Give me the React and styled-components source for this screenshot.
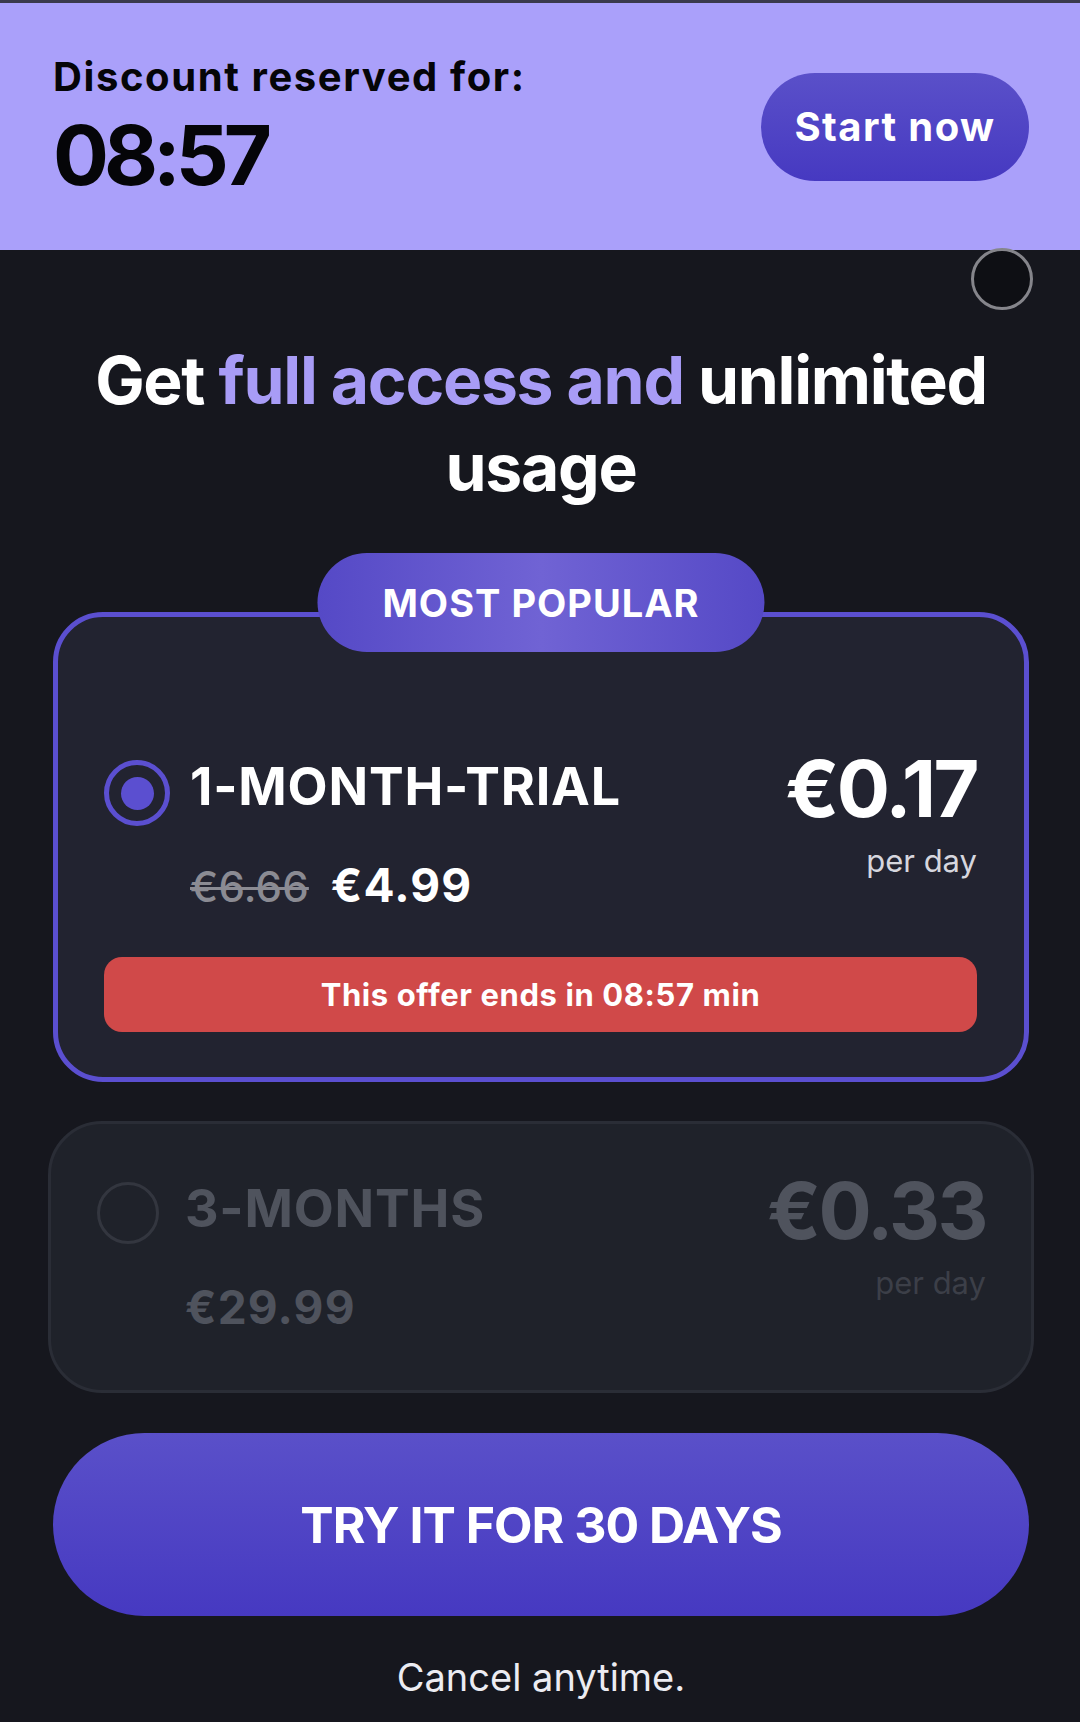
import React from 'react'
import styled, { createGlobalStyle } from 'styled-components'

const GlobalStyle = createGlobalStyle`
  html, body {
    margin: 0;
    padding: 0;
    background: #16171e;
  }
  body {
    font-family: Inter, "Noto Sans", sans-serif;
    -webkit-font-smoothing: antialiased;
  }
  * {
    box-sizing: border-box;
  }
`

const Page = styled.div`
  position: relative;
  width: 1080px;
  min-height: 1722px;
  background: #16171e;
  color: #fff;
`

const Header = styled.header`
  height: 250px;
  border-top: 3px solid #3b3a4c;
  background: #aaa0fa;
  display: flex;
  align-items: center;
  justify-content: space-between;
  padding: 0 51px 0 53px;
`

const Countdown = styled.div`
  display: flex;
  flex-direction: column;
  color: #050508;
`

const CountdownLabel = styled.div`
  font-size: 40px;
  font-weight: 700;
  line-height: 1;
  letter-spacing: 1.6px;
`

const CountdownTime = styled.div`
  margin-top: 17px;
  font-size: 83px;
  font-weight: 700;
  line-height: 1;
  letter-spacing: -5px;
`

const PillButton = styled.button`
  border: none;
  cursor: pointer;
  font-family: inherit;
  color: #fff;
  font-weight: 700;
  border-radius: 999px;
  background: linear-gradient(180deg, #5a50c9 0%, #4639c1 100%);
  display: flex;
  align-items: center;
  justify-content: center;
  width: ${props => props.width || 'auto'};
  height: ${props => props.height}px;
  font-size: ${props => props.size}px;
  letter-spacing: ${props => props.spacing || 0}px;
`

const CloseDot = styled.div`
  position: absolute;
  top: 248px;
  right: 47px;
  width: 62px;
  height: 62px;
  border-radius: 50%;
  border: 3px solid #85858b;
  background: #0e0f14;
`

const Content = styled.main`
  padding: 0 51px 0 53px;
  display: flex;
  flex-direction: column;
`

const Headline = styled.h1`
  margin: 87px 0 0;
  font-size: 66px;
  font-weight: 700;
  line-height: 87px;
  text-align: center;
  letter-spacing: -1.3px;
  color: #fff;
  span {
    color: #a89cf6;
  }
`

const CardWrap = styled.div`
  position: relative;
  margin-top: 101px;
`

const Badge = styled.div`
  position: absolute;
  top: -59px;
  left: 50%;
  transform: translateX(-50%);
  width: 447px;
  height: 99px;
  border-radius: 50px;
  background: linear-gradient(90deg, #5549c6 0%, #7063d4 50%, #5549c6 100%);
  display: flex;
  align-items: center;
  justify-content: center;
  font-size: 38px;
  font-weight: 700;
  letter-spacing: 1px;
  color: #fff;
  z-index: 1;
`

const PlanCard = styled.div`
  border-radius: ${props => (props.active ? 50 : 54)}px;
  border: ${props => (props.active ? '5px solid #5b4fd0' : '3px solid #2a2d36')};
  background: ${props => (props.active ? '#222330' : '#1f222a')};
  margin: ${props => (props.active ? '0' : '39px -5px 0')};
  padding: ${props => (props.active ? '132px 47px 45px 46px' : '47px 45px 60px 46px')};
  color: ${props => (props.active ? '#fff' : '#4f535d')};
`

const PlanTop = styled.div`
  display: flex;
  justify-content: space-between;
  align-items: flex-start;
`

const PlanLeft = styled.div`
  display: flex;
  flex-direction: column;
`

const TitleRow = styled.div`
  display: flex;
  align-items: flex-start;
`

const Radio = styled.div`
  flex: none;
  width: ${props => props.size}px;
  height: ${props => props.size}px;
  margin-top: ${props => props.offset}px;
  border-radius: 50%;
  border: ${props => (props.checked ? '5px solid #5b4fd0' : '3px solid #33363f')};
  display: flex;
  align-items: center;
  justify-content: center;
  &::after {
    content: '';
    display: ${props => (props.checked ? 'block' : 'none')};
    width: 33px;
    height: 33px;
    border-radius: 50%;
    background: #5b4fd0;
  }
`

const PlanTitle = styled.div`
  margin: ${props => props.offset}px 0 0 ${props => props.gap}px;
  font-size: 52px;
  font-weight: 700;
  line-height: 1;
  letter-spacing: 0.8px;
`

const PriceRow = styled.div`
  display: flex;
  align-items: baseline;
  gap: 22px;
  margin-left: ${props => props.indent}px;
  margin-top: ${props => props.offset}px;
  font-size: 46px;
  font-weight: 700;
  line-height: 1;
  letter-spacing: 1.2px;
`

const OldPrice = styled.s`
  color: #8b8b93;
  font-size: 42px;
  font-weight: 500;
  letter-spacing: 0.2px;
  text-decoration-thickness: 3px;
`

const PerDay = styled.div`
  display: flex;
  flex-direction: column;
  align-items: flex-end;
`

const DayPrice = styled.div`
  font-size: 79px;
  font-weight: 700;
  line-height: 1;
  letter-spacing: -2.5px;
`

const DayLabel = styled.div`
  margin-top: 17px;
  font-size: 31px;
  font-weight: 400;
  line-height: 1;
  color: ${props => (props.active ? '#d6d6de' : '#3c3f48')};
`

const OfferBar = styled.div`
  margin-top: 49px;
  height: 75px;
  border-radius: 18px;
  background: #d04949;
  display: flex;
  align-items: center;
  justify-content: center;
  font-size: 31px;
  font-weight: 700;
  letter-spacing: 0.6px;
  color: #fff;
`

const Footer = styled.div`
  margin-top: 40px;
  display: flex;
  flex-direction: column;
  align-items: stretch;
`

const CancelNote = styled.p`
  margin: 42px 0 0;
  font-size: 38px;
  line-height: 1;
  text-align: center;
  color: #ececf2;
`

export default function App() {
  return (
    <Page>
      <GlobalStyle />
      <Header>
        <Countdown>
          <CountdownLabel>Discount reserved for:</CountdownLabel>
          <CountdownTime>08:57</CountdownTime>
        </Countdown>
        <PillButton width="268px" height={108} size={40} spacing={1.4}>Start now</PillButton>
      </Header>
      <CloseDot />
      <Content>
        <Headline>
          Get <span>full access and</span> unlimited<br />usage
        </Headline>

        <CardWrap>
          <Badge>MOST POPULAR</Badge>
          <PlanCard active>
            <PlanTop>
              <PlanLeft>
                <TitleRow>
                  <Radio checked size={66} offset={11} />
                  <PlanTitle gap={20} offset={12}>1-MONTH-TRIAL</PlanTitle>
                </TitleRow>
                <PriceRow indent={86} offset={36}>
                  <OldPrice>€6.66</OldPrice>
                  <span>€4.99</span>
                </PriceRow>
              </PlanLeft>
              <PerDay>
                <DayPrice>€0.17</DayPrice>
                <DayLabel active>per day</DayLabel>
              </PerDay>
            </PlanTop>
            <OfferBar>This offer ends in 08:57 min</OfferBar>
          </PlanCard>
        </CardWrap>

        <PlanCard>
          <PlanTop>
            <PlanLeft>
              <TitleRow>
                <Radio size={62} offset={11} />
                <PlanTitle gap={26} offset={12}>3-MONTHS</PlanTitle>
              </TitleRow>
              <PriceRow indent={88} offset={40}>
                <span>€29.99</span>
              </PriceRow>
            </PlanLeft>
            <PerDay>
              <DayPrice>€0.33</DayPrice>
              <DayLabel>per day</DayLabel>
            </PerDay>
          </PlanTop>
        </PlanCard>

        <Footer>
          <PillButton height={183} size={50} spacing={-1}>TRY IT FOR 30 DAYS</PillButton>
          <CancelNote>Cancel anytime.</CancelNote>
        </Footer>
      </Content>
    </Page>
  )
}
